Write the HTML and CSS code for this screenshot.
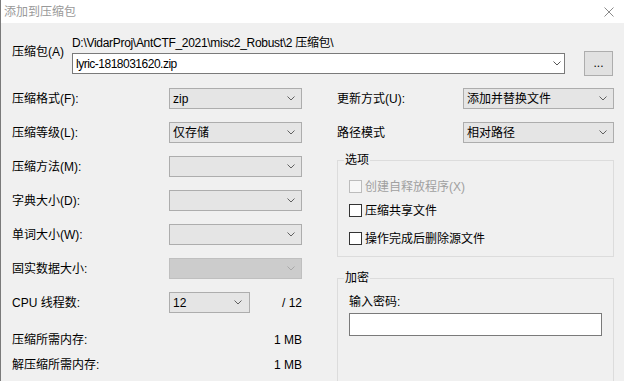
FILE: index.html
```html
<!DOCTYPE html>
<html lang="zh-CN">
<head>
    <meta charset="UTF-8">
    <meta name="viewport" content="width=device-width, initial-scale=1.0">
    <title>添加到压缩包</title>
    <link rel="stylesheet" href="styles.css">
</head>
<body>
    <div class="dialog">
        <div class="titlebar">
            <span class="title">添加到压缩包</span>
            <svg class="close" width="10" height="10" viewBox="0 0 10 10">
                <path d="M0.5 0.5 L9.5 9.5 M9.5 0.5 L0.5 9.5" stroke="#8a8a8a" stroke-width="1" fill="none"/>
            </svg>
        </div>

        <div class="content">
            <!-- Путь к архиву -->
            <div class="archive">
                <div class="archive-label">压缩包(A)</div>
                <div class="archive-field">
                    <div class="path">D:\VidarProj\AntCTF_2021\misc2_Robust\2 压缩包\</div>
                    <div class="archive-row">
                        <div class="edit">
                            <span class="edit-text">lyric-1818031620.zip</span>
                            <svg class="arrow" width="8" height="5" viewBox="0 0 8 5"><path d="M0.5 0.5 L4 4 L7.5 0.5" stroke="#555" fill="none"/></svg>
                        </div>
                        <div class="browse">...</div>
                    </div>
                </div>
            </div>

            <div class="columns">
                <div class="left">
                    <div class="field-row">
                        <span>压缩格式(F):</span>
                        <div class="combo"><span>zip</span><svg class="arrow" width="8" height="5" viewBox="0 0 8 5"><path d="M0.5 0.5 L4 4 L7.5 0.5" stroke="#606060" fill="none"/></svg></div>
                    </div>
                    <div class="field-row">
                        <span>压缩等级(L):</span>
                        <div class="combo"><span>仅存储</span><svg class="arrow" width="8" height="5" viewBox="0 0 8 5"><path d="M0.5 0.5 L4 4 L7.5 0.5" stroke="#606060" fill="none"/></svg></div>
                    </div>
                    <div class="field-row">
                        <span>压缩方法(M):</span>
                        <div class="combo"><span></span><svg class="arrow" width="8" height="5" viewBox="0 0 8 5"><path d="M0.5 0.5 L4 4 L7.5 0.5" stroke="#606060" fill="none"/></svg></div>
                    </div>
                    <div class="field-row">
                        <span>字典大小(D):</span>
                        <div class="combo"><span></span><svg class="arrow" width="8" height="5" viewBox="0 0 8 5"><path d="M0.5 0.5 L4 4 L7.5 0.5" stroke="#606060" fill="none"/></svg></div>
                    </div>
                    <div class="field-row">
                        <span>单词大小(W):</span>
                        <div class="combo"><span></span><svg class="arrow" width="8" height="5" viewBox="0 0 8 5"><path d="M0.5 0.5 L4 4 L7.5 0.5" stroke="#606060" fill="none"/></svg></div>
                    </div>
                    <div class="field-row">
                        <span>固实数据大小:</span>
                        <div class="combo disabled"><span></span><svg class="arrow" width="8" height="5" viewBox="0 0 8 5"><path d="M0.5 0.5 L4 4 L7.5 0.5" stroke="#a8a8a8" fill="none"/></svg></div>
                    </div>
                    <div class="field-row cpu-row">
                        <span>CPU 线程数:</span>
                        <div class="combo small"><span>12</span><svg class="arrow" width="8" height="5" viewBox="0 0 8 5"><path d="M0.5 0.5 L4 4 L7.5 0.5" stroke="#606060" fill="none"/></svg></div>
                        <span class="num">/ 12</span>
                    </div>
                    <div class="mem-row">
                        <span>压缩所需内存:</span>
                        <span>1 MB</span>
                    </div>
                    <div class="mem-row">
                        <span>解压缩所需内存:</span>
                        <span>1 MB</span>
                    </div>
                </div>

                <div class="right">
                    <div class="field-row">
                        <span>更新方式(U):</span>
                        <div class="combo wide"><span>添加并替换文件</span><svg class="arrow" width="8" height="5" viewBox="0 0 8 5"><path d="M0.5 0.5 L4 4 L7.5 0.5" stroke="#606060" fill="none"/></svg></div>
                    </div>
                    <div class="field-row last">
                        <span>路径模式</span>
                        <div class="combo wide"><span>相对路径</span><svg class="arrow" width="8" height="5" viewBox="0 0 8 5"><path d="M0.5 0.5 L4 4 L7.5 0.5" stroke="#606060" fill="none"/></svg></div>
                    </div>

                    <fieldset class="group options">
                        <legend>选项</legend>
                        <div class="check check-1 disabled"><span class="box"></span><span>创建自释放程序(X)</span></div>
                        <div class="check check-2"><span class="box"></span><span>压缩共享文件</span></div>
                        <div class="check check-3"><span class="box"></span><span>操作完成后删除源文件</span></div>
                    </fieldset>

                    <fieldset class="group crypt">
                        <legend>加密</legend>
                        <div class="pass-label">输入密码:</div>
                        <div class="pass-input"></div>
                    </fieldset>
                </div>
            </div>
        </div>
    </div>
</body>
</html>
```

FILE: styles.css
```css
* {
    box-sizing: border-box;
}

body {
    margin: 0;
    font: 12px/16px "Liberation Sans", "Noto Sans CJK SC", sans-serif;
    color: #000;
    background: #f0f0f0;
}

.dialog {
    width: 624px;
    height: 381px;
    overflow: hidden;
    border-left: 1px solid #7a7a7a;
    background: #f0f0f0;
}

/* Заголовок окна */
.titlebar {
    height: 23px;
    background: #fff;
    display: flex;
    align-items: center;
    justify-content: space-between;
    padding: 0 10px 0 3px;
}

.title {
    color: #999;
}

.content {
    padding: 12px 0 0 11px;
}

.archive {
    display: flex;
}

.archive-label {
    width: 60px;
    padding-top: 9px;
}

.path {
    height: 16px;
    white-space: nowrap;
    letter-spacing: -0.3px;
}

.archive-row {
    display: flex;
    align-items: center;
    gap: 19px;
}

.edit {
    width: 493px;
    height: 21px;
    border: 1px solid #7a7a7a;
    background: #fff;
    display: flex;
    align-items: center;
    justify-content: space-between;
    padding: 0 3px 0 3px;
}

.edit-text {
    letter-spacing: -0.5px;
}

.browse {
    width: 29px;
    height: 25px;
    border: 1px solid #adadad;
    background: #e1e1e1;
    text-align: center;
    line-height: 23px;
}

.columns {
    display: flex;
    gap: 35px;
    margin-top: 12px;
}

.left {
    width: 290px;
}

.right {
    width: 277px;
}

.field-row {
    display: flex;
    align-items: center;
    justify-content: space-between;
    height: 21px;
    margin-bottom: 13px;
}

.field-row.last {
    margin-bottom: 9px;
}

.cpu-row {
    display: grid;
    grid-template-columns: 157px 81px 1fr;
    margin-bottom: 19px;
}

.num {
    text-align: right;
}

.mem-row {
    display: flex;
    justify-content: space-between;
    margin-bottom: 9px;
}

/* Выпадающие списки */
.combo {
    width: 133px;
    height: 21px;
    border: 1px solid #adadad;
    background: #e5e5e5;
    display: flex;
    align-items: center;
    justify-content: space-between;
    padding: 0 6px 0 3px;
}

.combo.small {
    width: 81px;
    padding-right: 7px;
}

.combo.wide {
    width: 151px;
}

.combo.disabled {
    background: #cccccc;
    border-color: #bfbfbf;
}

/* Группы */
.group {
    margin: 0;
    padding: 0 11px;
    border: 1px solid #dcdcdc;
}

.group legend {
    padding: 0 1px;
    margin-left: -5px;
    line-height: 16px;
}

.options {
    height: 105px;
}

.check {
    display: flex;
    align-items: center;
    gap: 3px;
    height: 13px;
}

.check .box {
    width: 13px;
    height: 13px;
    border: 1px solid #333;
    background: #fff;
}

.check.disabled {
    color: #a0a0a0;
}

.check.disabled .box {
    border-color: #bcbcbc;
    background: #f7f7f7;
}

.check-1 {
    margin-top: 12px;
}

.check-2 {
    margin-top: 11px;
}

.check-3 {
    margin-top: 15px;
}

.crypt {
    margin-top: 13px;
    height: 200px;
}

.pass-label {
    margin-top: 8px;
}

.pass-input {
    margin-top: 3px;
    height: 23px;
    border: 1px solid #7a7a7a;
    background: #fff;
}
```
